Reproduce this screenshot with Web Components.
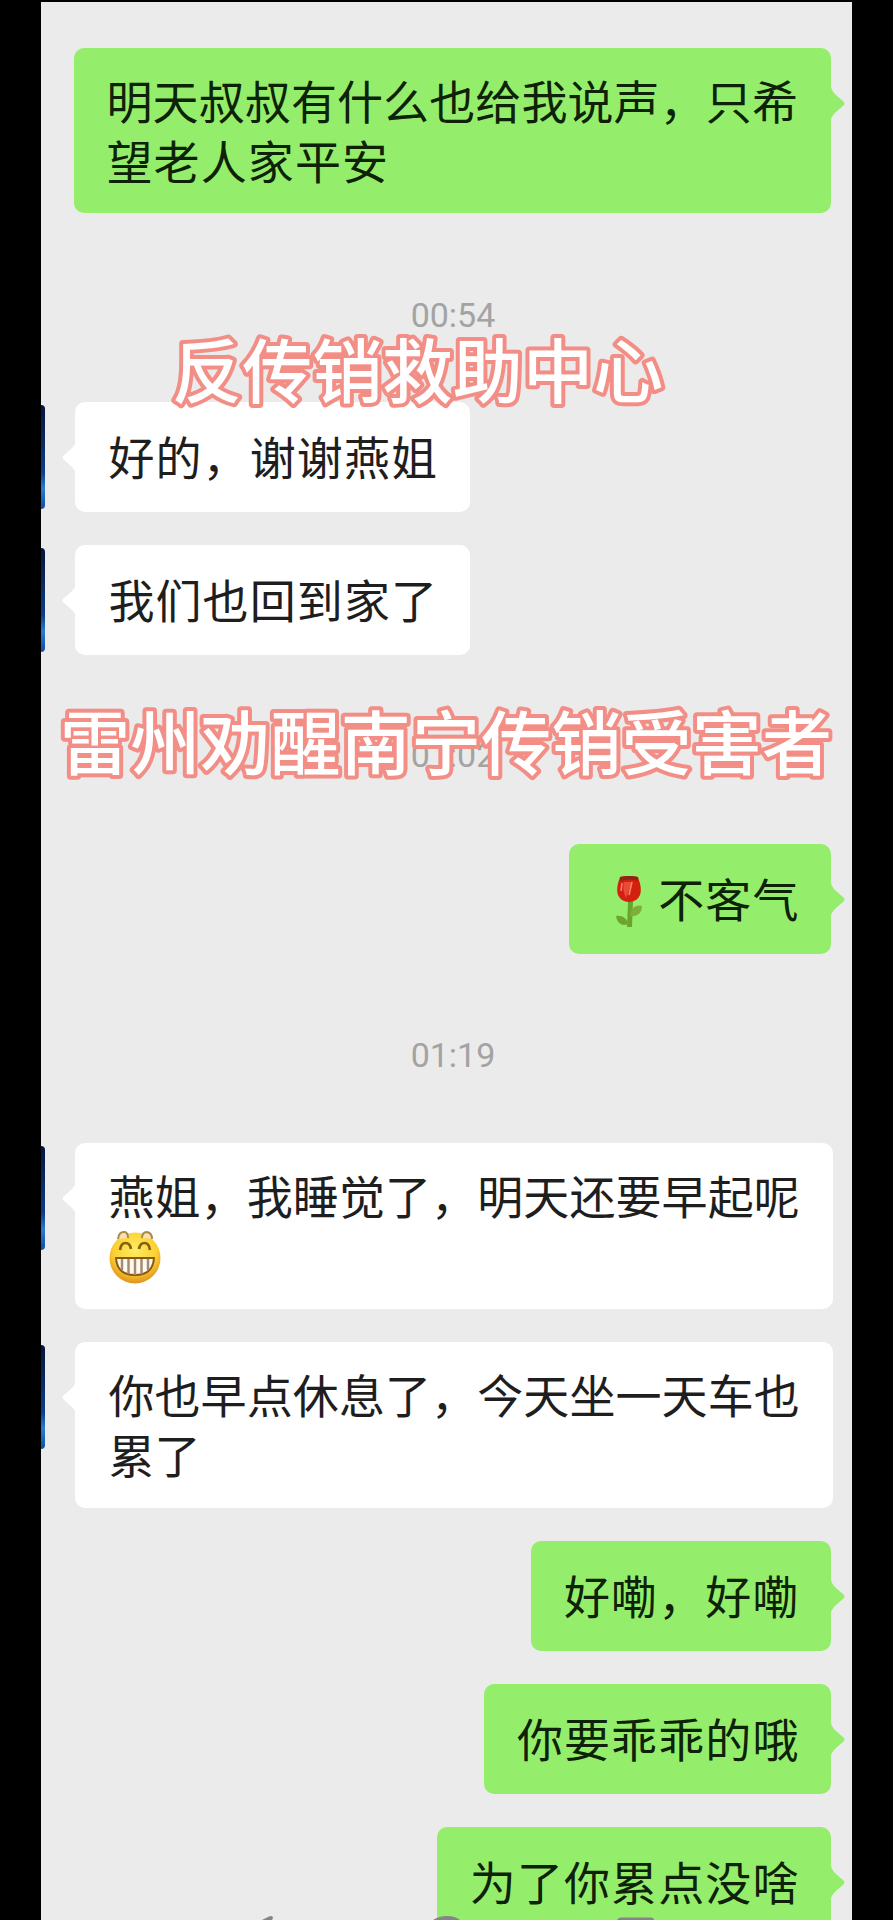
<!DOCTYPE html>
<html lang="zh-CN">
<head>
<meta charset="utf-8">
<title>聊天记录</title>
<style>
html,body{margin:0;padding:0;background:#000;overflow:hidden;height:1920px}
body{font-family:"Noto Sans CJK SC",sans-serif}
</style>
</head>
<body>
<chat-screen>
  <chat-message side="me" lines="2">明天叔叔有什么也给我说声，只希<span style="letter-spacing:1.1px">望老人家平安</span></chat-message>
  <chat-time style="margin-top:72.5px">00:54</chat-time>
  <chat-message side="peer" style="margin-top:56.5px">好的，谢谢燕姐</chat-message>
  <chat-message side="peer" style="margin-top:33px">我们也回到家了</chat-message>
  <chat-time style="margin-top:71px">01:02</chat-time>
  <chat-message side="me" style="margin-top:58px"><rose-emoji></rose-emoji>不客气</chat-message>
  <chat-time style="margin-top:72px">01:19</chat-time>
  <chat-message side="peer" lines="2" style="margin-top:57px">燕姐，我睡觉了，明天还要早起呢<grin-emoji></grin-emoji></chat-message>
  <chat-message side="peer" lines="2" style="margin-top:33px">你也早点休息了，今天坐一天车也累了</chat-message>
  <chat-message side="me" style="margin-top:33px">好嘞，好嘞</chat-message>
  <chat-message side="me" style="margin-top:33px">你要乖乖的哦</chat-message>
  <chat-message side="me" style="margin-top:33px">为了你累点没啥</chat-message>
  <video-caption slot="overlay" text="反传销救助中心" style="left:130.500px;top:320.500px"></video-caption>
  <video-caption slot="overlay" text="雷州劝醒南宁传销受害者" style="left:19px;top:692.500px"></video-caption>
  <cut-marks slot="overlay"></cut-marks>
</chat-screen>
<script>
function define(name, html, setup){
  const t=document.createElement('template');
  t.innerHTML=html;
  customElements.define(name,class extends HTMLElement{
    constructor(){super();this.attachShadow({mode:'open'}).appendChild(t.content.cloneNode(true));}
    connectedCallback(){if(setup)setup(this);}
  });
}
define('chat-screen',`<style>
:host{display:block;position:relative;box-sizing:border-box;width:811px;height:1918px;margin:2px 0 0 41px;padding-top:45.5px;background:#ebebeb;overflow:hidden}
.list{display:flex;flex-direction:column}
</style><div class="list"><slot></slot></div><slot name="overlay"></slot>`);
define('chat-message',`<style>
:host{display:flex;height:110px;flex:none;padding:0 21px 0 0;--c:#95ee6b;--ink:#0d2206}
:host([side=me]){justify-content:flex-end}
:host([side=peer]){--c:#fff;--ink:#1e1e1e;padding:0 19px 0 0}
:host([lines="2"]){height:165.5px}
:host([side=peer][lines="2"]){height:166px}
.bubble{position:relative;box-sizing:border-box;background:var(--c);border-radius:10px;padding:23px 31.5px 0 33px;font-size:46px;letter-spacing:1.1px;line-height:60px;color:var(--ink);white-space:nowrap}
:host([lines="2"]) .bubble{width:757.5px;letter-spacing:.1px;white-space:normal;word-break:break-all;padding-right:30px;padding-top:21px}
.tail{position:absolute;top:37px;width:14px;height:36px;fill:var(--c)}
:host([side=me]) .tail{right:-13.5px}
:host([side=peer]) .tail{left:-13.5px;transform:scaleX(-1)}
.avatar{display:none}
:host([side=peer]) .avatar{display:block;flex:none;width:4px;height:104px;margin:3px 30.4px 0 0;border-radius:0 4px 4px 0;background:linear-gradient(#06143c,#0a2a63 35%,#0c3f8c 65%,#2c7bd0 80%,#0d4fa6)}
</style><div class="avatar"></div><div class="bubble"><svg class="tail" viewBox="0 0 14 36"><path d="M0 2C1 6 3 8 5 10L12.5 16.500Q14.500 18.500 12.500 20.500L5 27C3 29 1 31 0 34Z"/></svg><slot></slot></div>`);
define('chat-time',`<style>
:host{display:block;flex:none;height:60px;line-height:59px;text-align:center;font-family:Roboto,sans-serif;font-size:34px;color:#a3a3a3;padding-left:13px}
</style><slot></slot>`);
define('video-caption',`<style>
:host{display:block;position:absolute;width:720px;height:100px}
svg{display:block;overflow:visible}
text{font-size:70px;font-weight:500;letter-spacing:.2px;fill:#fff;stroke:#f28e85;stroke-width:8px;stroke-linejoin:round;paint-order:stroke fill}
</style><svg width="720" height="100"><text x="0" y="75"></text></svg>`,
  el=>{el.shadowRoot.querySelector('text').textContent=el.getAttribute('text');});
define('rose-emoji',`<style>
:host{display:inline-block;width:56px;height:52px;vertical-align:-11px}svg{display:block}
</style><svg width="56" height="52" viewBox="0 0 56 52">
<path d="M26 25h5l-1 26h-5z" fill="#69a52d"/>
<path d="M28 39c1-7 6-11 12-9 0 7-5 11-12 10z" fill="#7fae3b"/><path d="M26 48c-6 3-11-1-12-8 6-1 11 2 12 8z" fill="#6fa52e"/>
<path d="M18 1Q27-1 36 1C38 7 40 13 38 19Q35 26 27 26Q19 26 16 19C14 13 16 7 18 1Z" fill="#d4200f"/>
<path d="M18 1Q27-1 36 1L36 5Q27 2 18 5Z" fill="#8c2417"/><path d="M22 6Q20 14 24 22L30 6Z" fill="#ea4a36"/><path d="M30 6L27 19M20 7l-1 8" stroke="#f9806b" stroke-width="1.600" fill="none"/></svg>`);
define('grin-emoji',`<style>
:host{display:inline-block;width:54px;height:54px;vertical-align:-10px}svg{display:block}
</style><svg width="54" height="54" viewBox="0 0 54 54">
<defs><radialGradient id="g" cx=".5" cy=".35" r=".65"><stop offset="0" stop-color="#ffec62"/><stop offset=".65" stop-color="#fbd033"/><stop offset="1" stop-color="#e0921c"/></radialGradient></defs>
<circle cx="27" cy="28" r="25.500" fill="url(#g)"/>
<path d="M10 9Q11 1 17 2Q20 3 20 8M34 8Q34 3 38 2Q44 2 44 9" fill="#f8e3ae" stroke="#a9894f" stroke-width="2"/>
<path d="M12 20Q13 13 17.500 13Q22 13 23 19M31 19Q32 13 36.500 13Q41 13 42 20" fill="none" stroke="#84620d" stroke-width="2.700"/>
<path d="M8 28H46Q45 45 27 45Q9 45 8 28Z" fill="#fffaf0" stroke="#8a5910" stroke-width="2"/>
<path d="M14 29v11M20.500 29v15M27 29v16M33.500 29v15M40 29v11" stroke="#a88a72" stroke-width="2.500"/></svg>`);
define('cut-marks',`<style>
:host{display:block;position:absolute;left:0;bottom:0;width:811px;height:6px}svg{display:block}
</style><svg width="811" height="6" viewBox="41 1914 811 6" fill="#858585"><path d="M262 1920L269 1916.500Q273 1915 273 1918L272 1920Z"/><path d="M433 1920Q439 1916 447 1916T460 1920Z"/><path d="M617 1920Q618 1917.500 621 1917.500H651Q654 1917.500 654 1920Z"/></svg>`);
</script>
</body>
</html>
